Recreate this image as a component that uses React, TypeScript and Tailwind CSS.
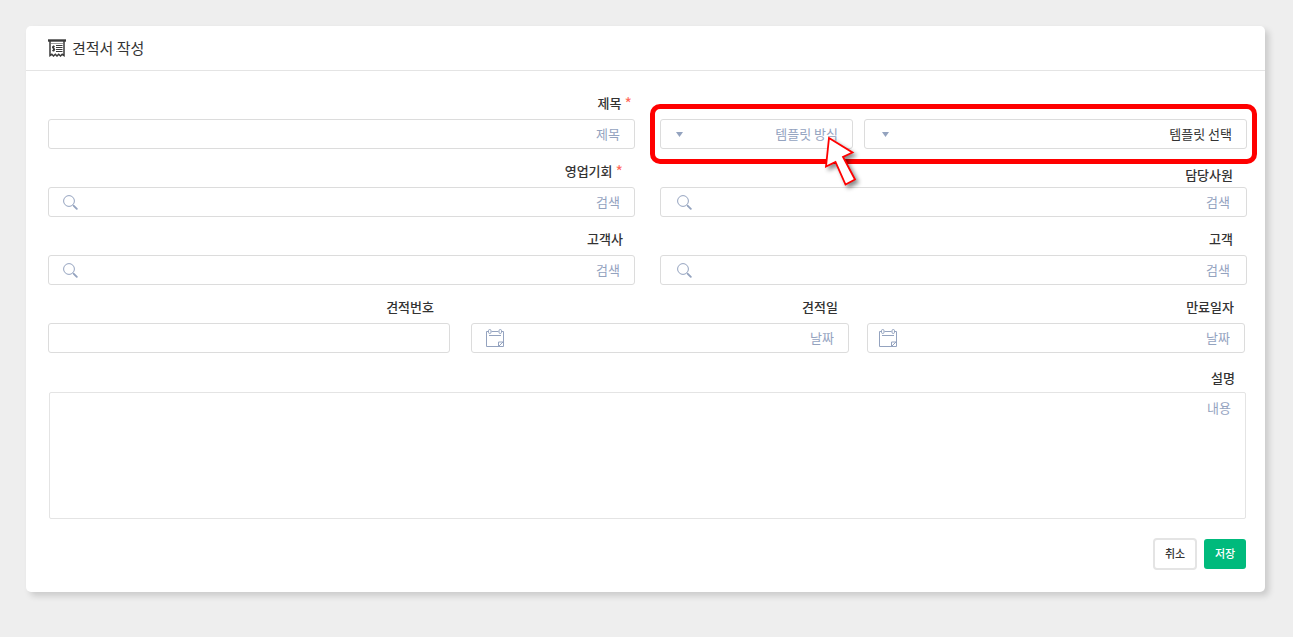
import React, { useId } from "react";
import clsx from "clsx";

type FieldProps = {
  label: string;
  placeholder?: string;
  icon?: React.ReactNode;
  required?: boolean;
  className?: string;
  labelClass?: string;
  boxClass?: string;
};

const ReceiptIcon = () => (
  <svg width="18" height="18" viewBox="0 0 18 18" fill="none" stroke="#3a3a3a" aria-hidden="true">
    <path d="M0 1.5h18" strokeWidth="2.4" />
    <path d="M2 2v14.5l1.8-1.2 1.7 1.7 1.8-1.7L9 17l1.7-1.7 1.8 1.7 1.7-1.7 1.8 1.2V2" strokeWidth="1.5" />
    <path d="M3.5 4.5h11" strokeWidth="1" strokeDasharray="1 1" />
    <path d="M8 6.5h6.5M8 8.5h6.5M8 10.5h6.5M8 12.5h6.5" strokeWidth="1.1" />
    <path d="M6.6 7.8C6 7.2 4.6 7.3 4.6 8.4S6.6 9.4 6.6 10.6 5 11.8 4.4 11.2M5.6 6.5v6" strokeWidth="1.3" />
  </svg>
);

const SearchIcon = () => (
  <svg className="shrink-0" width="15" height="15" viewBox="0 0 15 15" fill="none" stroke="#94a3bf" aria-hidden="true">
    <circle cx="6" cy="6" r="5.4" />
    <path d="M9.8 10l1.2 1" />
    <path d="M10.8 10.8l3 3" strokeWidth="1.9" strokeLinecap="round" />
  </svg>
);

const CalendarIcon = () => (
  <svg className="shrink-0" width="18" height="18" viewBox="0 0 18 18" fill="none" stroke="#94a3bf" aria-hidden="true">
    <path d="M2.5 2.5h-2v15h17v-15h-2M5.5 2.5h7" />
    <path d="M12.5 17.500v-4.500h5M13 17l4-4" />
    <path d="M3 6.500h12" />
    <rect x="2.500" y="0.500" width="2.500" height="4" rx="1.200" />
    <rect x="13" y="0.500" width="2.500" height="4" rx="1.200" />
  </svg>
);

const Caret = () => (
  <svg className="shrink-0" width="7" height="5" viewBox="0 0 7 5" aria-hidden="true">
    <path d="M0 0h7L3.500 5z" fill="#94a3bf" />
  </svg>
);

const Field = ({ label, placeholder, icon, required, className, labelClass, boxClass }: FieldProps) => {
  const id = useId();
  return (
    <div className={clsx("flex flex-col", className)}>
      <label
        htmlFor={id}
        className={clsx("flex h-[18px] justify-end font-medium leading-[18px]", labelClass || "mb-[7px] pr-3")}
      >
        {label}
        {required && <span className="ml-[3px] text-base leading-[18px] font-normal text-[#ff6a5a]">*</span>}
      </label>
      <div className={clsx("flex h-[30px] items-center rounded-[3px] border border-[#dcdcdc]", boxClass || "px-[14px]")}>
        {icon}
        <input
          id={id}
          type="text"
          placeholder={placeholder}
          className="h-full min-w-0 flex-1 bg-transparent pb-px text-right outline-none placeholder:text-[#94a3bf]"
        />
      </div>
    </div>
  );
};

const TemplateSelect = ({ text, className, selectClass }: { text: string; className: string; selectClass: string }) => (
  <div className={clsx("flex h-[30px] items-center rounded-[3px] border border-[#dcdcdc]", className)}>
    <Caret />
    <select
      aria-label={text}
      className={clsx("h-full min-w-0 flex-1 appearance-none bg-transparent pb-px outline-none [text-align-last:right]", selectClass)}
    >
      <option>{text}</option>
    </select>
  </div>
);

const Pointer = () => (
  <svg
    className="absolute -top-px left-[156px] drop-shadow-[3px_3px_2px_rgba(0,0,0,0.45)]"
    width="50"
    height="74"
    viewBox="0 0 50 74"
    aria-hidden="true"
  >
    <path d="M13 20l23.500 14.500-9.500 4.500 12 22.500-9.500 5-10-22.500-9.500 4.500z" fill="#fff" stroke="#ff0000" strokeWidth="1.800" />
  </svg>
);

const App = () => {
  return (
    <div className="min-h-screen bg-[#eeeeee] pt-[26px] pr-[28px] pb-[45px] pl-[26px] font-['Noto_Sans_CJK_KR','Noto_Sans',sans-serif] text-[13px] text-[#333333]">
      <form className="rounded-[5px] bg-white shadow-[4px_4px_6px_rgba(0,0,0,0.15)]">
        <div className="flex h-[45px] items-center gap-[6px] border-b border-[#e4e4e4] px-[22px]">
          <ReceiptIcon />
          <h1 className="text-[15px] leading-[22px]">견적서 작성</h1>
        </div>

        <div className="flex flex-col pt-[23px] pr-[18px] pb-[22px] pl-[22px]">
          <div className="grid grid-cols-2 items-end gap-x-[25px] gap-y-[13px]">
            <Field label="제목" placeholder="제목" required labelClass="mb-[7px] pr-[3px]" />
            <div className="relative grid grid-cols-[193fr_383fr] gap-[11px]">
              <TemplateSelect text="템플릿 방식" className="pr-[14px] pl-[15px]" selectClass="text-[#94a3bf]" />
              <TemplateSelect text="템플릿 선택" className="pr-[14px] pl-[17px]" selectClass="text-[#333333]" />
              <div className="pointer-events-none absolute -inset-x-[10px] -inset-y-[15px] rounded-[10px] border-5 border-[#ff0000]" />
              <Pointer />
            </div>

            <Field label="영업기회" placeholder="검색" required icon={<SearchIcon />} />
            <Field
              label="담당사원"
              placeholder="검색"
              icon={<SearchIcon />}
              labelClass="mb-[3px] pr-[14px]"
              boxClass="px-4"
            />

            <Field label="고객사" placeholder="검색" icon={<SearchIcon />} />
            <Field label="고객" placeholder="검색" icon={<SearchIcon />} labelClass="mb-[7px] pr-[14px]" boxClass="px-4" />
          </div>

          <div className="mt-[13px] flex gap-[21px] pr-[2px]">
            <Field label="견적번호" className="flex-[402]" labelClass="mb-[7px] pr-4" />
            <div className="flex flex-[774] gap-[18px]">
              <Field
                label="견적일"
                placeholder="날짜"
                icon={<CalendarIcon />}
                className="flex-1"
                labelClass="mb-[7px] pr-[11px]"
              />
              <Field
                label="만료일자"
                placeholder="날짜"
                icon={<CalendarIcon />}
                className="flex-1"
                labelClass="mb-[7px] pr-[11px]"
                boxClass="pr-[14px] pl-[11px]"
              />
            </div>
          </div>

          <div className="mt-4 flex flex-col pr-px pl-px">
            <label htmlFor="description" className="mb-[5px] h-[18px] pr-[11px] text-right font-medium leading-[18px]">
              설명
            </label>
            <textarea
              id="description"
              placeholder="내용"
              className="h-[127px] resize-none rounded-[2px] border border-[#e4e4e4] px-[14px] py-[6px] text-right leading-[18px] outline-none placeholder:text-[#94a3bf]"
            />
          </div>

          <div className="mt-[19px] flex items-center justify-end gap-[7px] pr-px text-[11px] font-medium">
            <button type="button" className="h-8 w-11 rounded-[4px] border-2 border-[#e4e4e4] bg-white pb-0.5">
              취소
            </button>
            <button type="submit" className="h-[30px] w-[42px] rounded-[3px] bg-[#00ba7c] pb-0.5 text-white">
              저장
            </button>
          </div>
        </div>
      </form>
    </div>
  );
};

export default App;
